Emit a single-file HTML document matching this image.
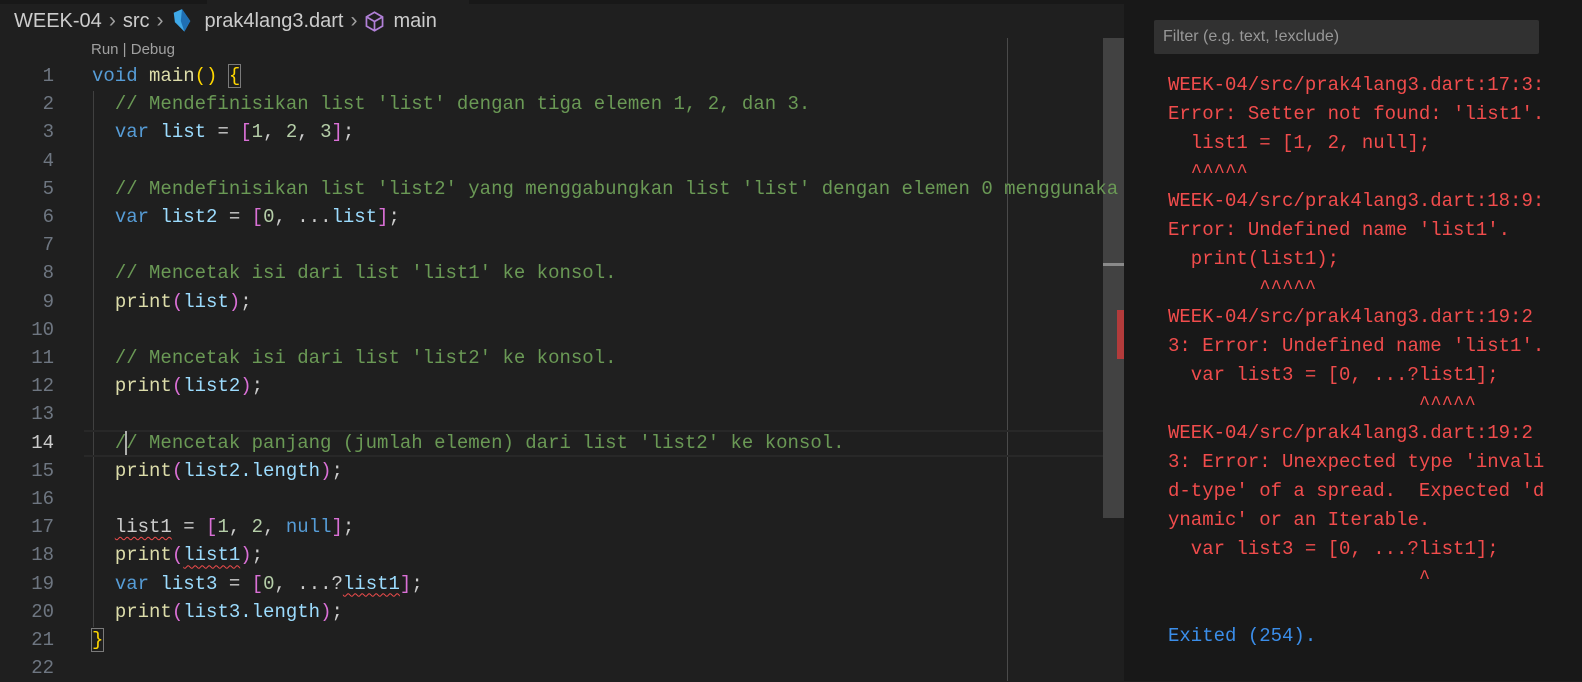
<!DOCTYPE html>
<html><head><style>
*{margin:0;padding:0;box-sizing:border-box}
body{width:1582px;height:681px;background:#1f1f1f;position:relative;overflow:hidden;font-family:"Liberation Sans",sans-serif}
.top{position:absolute;left:0;top:0;width:1124px;height:4px;background:#181818}
.top .t{position:absolute;left:207px;width:262px;top:0;height:4px;background:#1f1f1f}
.bc{position:absolute;left:14px;top:8px;font-size:20px;color:#cccccc;white-space:nowrap;display:flex;align-items:center}
.bc .s{color:#a0a0a0;margin:0 7px;font-size:21px}
.rd{position:absolute;left:91px;top:41px;font-size:15px;color:#a0a0a0}
.code{position:absolute;left:0;top:62px;font-family:"Liberation Mono",monospace;font-size:19px}
.ln{position:absolute;left:0;width:54px;text-align:right;color:#6e7681;height:28.2px;line-height:28.2px}
.l{position:absolute;left:92px;height:28.2px;line-height:28.2px;white-space:pre;color:#cccccc}
.c{color:#6a9955}.k{color:#569cd6}.f{color:#dcdcaa}.v{color:#9cdcfe}.n{color:#b5cea8}
.y{color:#ffd700}.p{color:#da70d6}.w{color:#cccccc}
.sq{text-decoration:underline wavy #f14c4c;text-decoration-thickness:1px;text-underline-offset:4px}
.panel{position:absolute;left:1124px;top:0;width:458px;height:681px;background:#181818}
.filter{position:absolute;left:30px;top:20px;width:385px;height:34px;background:#313131;border-radius:2px;color:#989898;font-size:16px;line-height:34px;padding-left:9px}
.out{position:absolute;left:44px;top:71px;font-family:"Liberation Mono",monospace;font-size:19px;line-height:29px;color:#f14c4c;white-space:pre}
</style></head><body>
<div class="top"><div class="t"></div></div>
<div class="bc">WEEK-04<span class="s">›</span>src<span class="s">›</span>
<svg width="24" height="26" viewBox="0 0 20 22" style="margin-right:10px"><path d="M3 4 L10 1 L17 11 L12 20 L4 12 Z" fill="#3fa9e8"/><path d="M10 1 L17 11 L12 20 L9 11 Z" fill="#1f6fb3"/></svg>prak4lang3.dart<span class="s">›</span>
<svg width="21" height="23" viewBox="0 0 18 20" style="margin-right:8px"><path d="M9 2 L16 6 L16 14 L9 18 L2 14 L2 6 Z M2 6 L9 10 L16 6 M9 10 L9 18" fill="none" stroke="#b180d7" stroke-width="1.5"/></svg>main</div>
<div class="rd">Run | Debug</div>
<div style="position:absolute;left:93px;top:91px;width:1px;height:536px;background:#404040"></div>
<div style="position:absolute;left:1007px;top:38px;width:1px;height:643px;background:#4a4a4a"></div>
<div style="position:absolute;left:84px;top:430px;width:1020px;height:27px;border-top:2px solid #282828;border-bottom:2px solid #282828"></div>
<div style="position:absolute;left:1103px;top:38px;width:21px;height:480px;background:#424242"></div>
<div style="position:absolute;left:1103px;top:263px;width:21px;height:3px;background:#8a8a8a"></div>
<div style="position:absolute;left:1117px;top:310px;width:7px;height:49px;background:#b23b3b"></div>
<div class="code">
<div class="ln" style="top:0">1</div><div class="ln" style="top:28.2px">2</div><div class="ln" style="top:56.4px">3</div><div class="ln" style="top:84.6px">4</div><div class="ln" style="top:112.8px">5</div><div class="ln" style="top:141px">6</div><div class="ln" style="top:169.2px">7</div><div class="ln" style="top:197.4px">8</div><div class="ln" style="top:225.6px">9</div><div class="ln" style="top:253.8px">10</div><div class="ln" style="top:282px">11</div><div class="ln" style="top:310.2px">12</div><div class="ln" style="top:338.4px">13</div><div class="ln" style="top:366.6px;color:#cccccc">14</div><div class="ln" style="top:394.8px">15</div><div class="ln" style="top:423px">16</div><div class="ln" style="top:451.2px">17</div><div class="ln" style="top:479.4px">18</div><div class="ln" style="top:507.6px">19</div><div class="ln" style="top:535.8px">20</div><div class="ln" style="top:564px">21</div><div class="ln" style="top:592.2px">22</div>
<div class="l" style="top:0"><span class="k">void</span> <span class="f">main</span><span class="y">()</span> <span class="y" style="outline:1px solid #7a7a7a">{</span></div>
<div class="l" style="top:28.2px">  <span class="c">// Mendefinisikan list 'list' dengan tiga elemen 1, 2, dan 3.</span></div>
<div class="l" style="top:56.4px">  <span class="k">var</span> <span class="v">list</span> = <span class="p">[</span><span class="n">1</span>, <span class="n">2</span>, <span class="n">3</span><span class="p">]</span>;</div>
<div class="l" style="top:112.8px">  <span class="c">// Mendefinisikan list 'list2' yang menggabungkan list 'list' dengan elemen 0 menggunaka</span></div>
<div class="l" style="top:141px">  <span class="k">var</span> <span class="v">list2</span> = <span class="p">[</span><span class="n">0</span>, ...<span class="v">list</span><span class="p">]</span>;</div>
<div class="l" style="top:197.4px">  <span class="c">// Mencetak isi dari list 'list1' ke konsol.</span></div>
<div class="l" style="top:225.6px">  <span class="f">print</span><span class="p">(</span><span class="v">list</span><span class="p">)</span>;</div>
<div class="l" style="top:282px">  <span class="c">// Mencetak isi dari list 'list2' ke konsol.</span></div>
<div class="l" style="top:310.2px">  <span class="f">print</span><span class="p">(</span><span class="v">list2</span><span class="p">)</span>;</div>
<div class="l" style="top:366.6px">  <span class="c">// Mencetak panjang (jumlah elemen) dari list 'list2' ke konsol.</span></div>
<div class="l" style="top:394.8px">  <span class="f">print</span><span class="p">(</span><span class="v">list2.length</span><span class="p">)</span>;</div>
<div class="l" style="top:451.2px">  <span class="sq">list1</span> = <span class="p">[</span><span class="n">1</span>, <span class="n">2</span>, <span class="k">null</span><span class="p">]</span>;</div>
<div class="l" style="top:479.4px">  <span class="f">print</span><span class="p">(</span><span class="sq v">list1</span><span class="p">)</span>;</div>
<div class="l" style="top:507.6px">  <span class="k">var</span> <span class="v">list3</span> = <span class="p">[</span><span class="n">0</span>, ...?<span class="sq v">list1</span><span class="p">]</span>;</div>
<div class="l" style="top:535.8px">  <span class="f">print</span><span class="p">(</span><span class="v">list3.length</span><span class="p">)</span>;</div>
<div class="l" style="top:564px"><span class="y" style="outline:1px solid #7a7a7a">}</span></div>
<div style="position:absolute;left:125px;top:369px;width:2px;height:24px;background:#aeafad"></div>
</div>
<div class="panel">
<div class="filter">Filter (e.g. text, !exclude)</div>
<div class="out">WEEK-04/src/prak4lang3.dart:17:3:
Error: Setter not found: 'list1'.
  list1 = [1, 2, null];
  ^^^^^
WEEK-04/src/prak4lang3.dart:18:9:
Error: Undefined name 'list1'.
  print(list1);
        ^^^^^
WEEK-04/src/prak4lang3.dart:19:2
3: Error: Undefined name 'list1'.
  var list3 = [0, ...?list1];
                      ^^^^^
WEEK-04/src/prak4lang3.dart:19:2
3: Error: Unexpected type 'invali
d-type' of a spread.  Expected 'd
ynamic' or an Iterable.
  var list3 = [0, ...?list1];
                      ^

<span style="color:#3b8eea">Exited (254).</span></div>
</div>
</body></html>
